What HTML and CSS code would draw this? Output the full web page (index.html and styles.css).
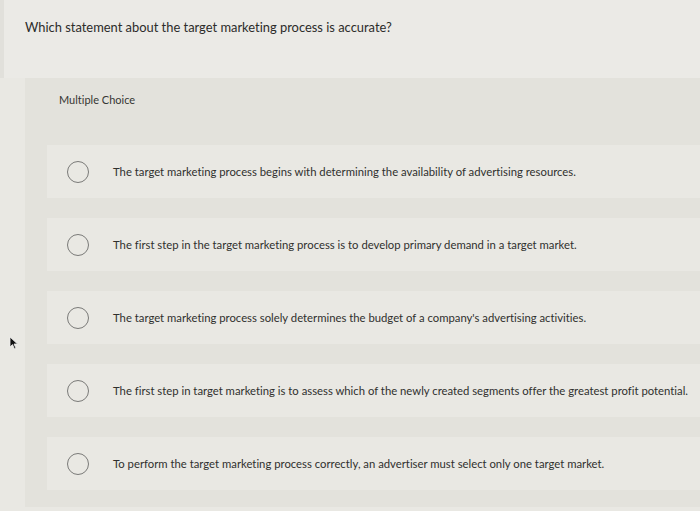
FILE: index.html
```html
<!DOCTYPE html>
<html>
<head>
<meta charset="utf-8">
<link rel="stylesheet" href="styles.css">
</head>
<body>
<div class="page">
  <header class="question">
    <p class="prompt">Which statement about the target marketing process is accurate?</p>
  </header>
  <section class="panel">
    <div class="kind">Multiple Choice</div>
    <ul class="options">
      <li class="option"><span class="radio"></span><span class="label">The target marketing process begins with determining the availability of advertising resources.</span></li>
      <li class="option"><span class="radio"></span><span class="label">The first step in the target marketing process is to develop primary demand in a target market.</span></li>
      <li class="option"><span class="radio"></span><span class="label">The target marketing process solely determines the budget of a company's advertising activities.</span></li>
      <li class="option"><span class="radio"></span><span class="label">The first step in target marketing is to assess which of the newly created segments offer the greatest profit potential.</span></li>
      <li class="option"><span class="radio"></span><span class="label">To perform the target marketing process correctly, an advertiser must select only one target market.</span></li>
    </ul>
  </section>
  <svg class="cursor" width="10" height="14" viewBox="0 0 10 14"><path d="M1 1 L1 11 L3.5 8.6 L5.5 13 L7 12.3 L5 8 L8.5 8 Z" fill="#111" stroke="#eee" stroke-width="0.8"/></svg>
</div>
</body>
</html>
```
FILE: styles.css
```css
* { box-sizing: border-box; }
html, body {
  margin: 0;
  padding: 0;
  background: #e9e8e3;
}
.page {
  position: relative;
  width: 700px;
  height: 511px;
  overflow: hidden;
  font-family: "Lato", "Open Sans", sans-serif;
  font-variant-ligatures: none;
  color: #333331;
  background: #e9e8e3;
}
.question {
  height: 78px;
  padding: 19px 0 0 25px;
  background: #ebeae6;
  border-left: 4px solid #e1e0db;
}
.prompt {
  margin: 0;
  margin-left: -4px;
  font-size: 12.9px;
  line-height: 16px;
  color: #2c2c2a;
}
.panel {
  margin-left: 25px;
  padding: 15px 0 17px 0;
  background: #e3e2dc;
}
.kind {
  padding-left: 34px;
  font-size: 11px;
  line-height: 14px;
  color: #363633;
  margin-bottom: 38px;
}
.options {
  list-style: none;
  margin: 0 0 0 22px;
  padding: 0;
  display: flex;
  flex-direction: column;
  gap: 20px;
}
.option {
  height: 53px;
  display: flex;
  align-items: center;
  background: #e9e8e3;
  padding-left: 20px;
}
.radio {
  width: 22px;
  height: 22px;
  border-radius: 50%;
  border: 1.5px solid #7a7a78;
  flex: none;
}
.label {
  margin-left: 24px;
  font-size: 11.3px;
  color: #30302e;
  white-space: nowrap;
}
.cursor {
  position: absolute;
  left: 9px;
  top: 336px;
}
```
